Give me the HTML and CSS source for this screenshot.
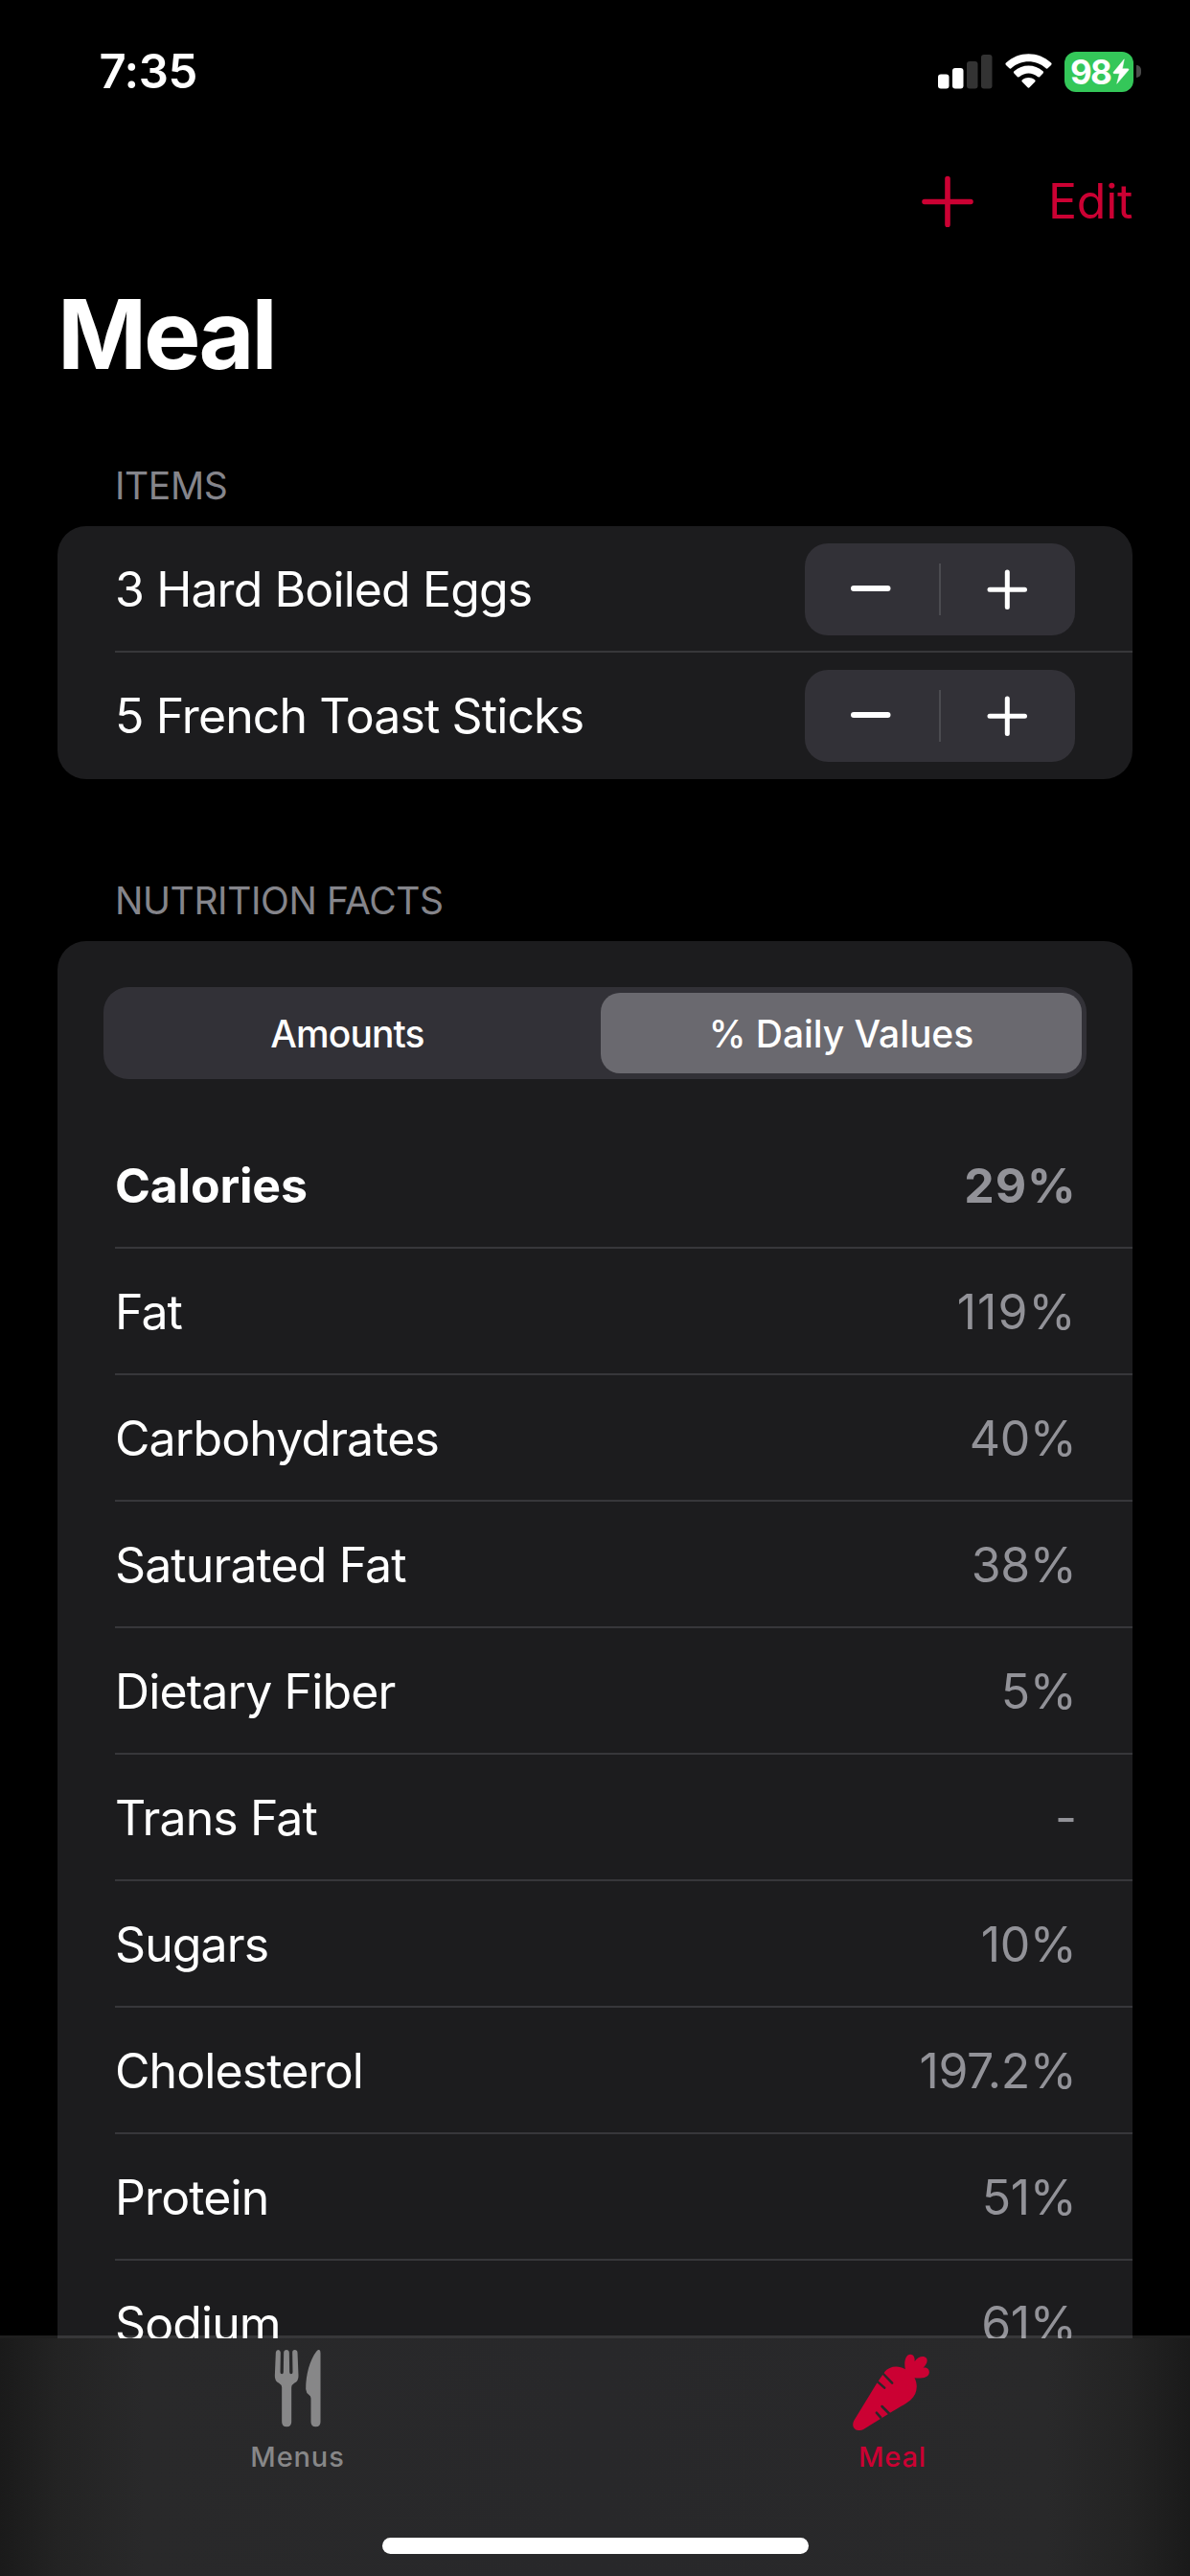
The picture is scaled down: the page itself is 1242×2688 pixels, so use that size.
FILE: index.html
```html
<!DOCTYPE html>
<html lang="en">
<head>
<meta charset="utf-8">
<title>Meal</title>
<link rel="stylesheet" href="styles.css">
</head>
<body>
<div class="screen">
  <header class="status">
    <span class="clock">7:35</span>
    <div class="indicators">
      <svg class="signal" viewBox="0 0 57 36" width="57" height="36">
        <g fill="#fff"><rect x="0" y="20.500" width="11.500" height="15" rx="3"/><rect x="15" y="14" width="11.500" height="21.500" rx="3"/></g>
        <g fill="#333"><rect x="30" y="7" width="11.500" height="28.500" rx="3"/><rect x="45" y="0" width="11.500" height="35.500" rx="3"/></g>
      </svg>
      <svg class="wifi" viewBox="0 0 49 37" width="49" height="37" fill="#fff">
        <path d="M1 9.500C14-3 35-3 48 9.500c.8.800.8 1.700 0 2.400l-3.200 3.200c-.8.800-1.700.8-2.500 0C32.500 6 16.500 6 6.700 15.100c-.8.800-1.700.8-2.500 0L1 11.900c-.8-.7-.8-1.600 0-2.400z"/>
        <path d="M9.500 18.200c8.500-7.600 21.500-7.600 30 0 .8.700.8 1.700.1 2.400l-3.300 3.300c-.7.700-1.600.7-2.400.1-5.400-4.700-13.400-4.700-18.800 0-.8.600-1.700.6-2.400-.1l-3.300-3.300c-.7-.7-.7-1.700.1-2.400z"/>
        <path d="M18 27.200c3.800-3 9.200-3 13 0 .8.700.8 1.600.1 2.300l-5.400 5.600c-.7.700-1.700.7-2.400 0l-5.400-5.600c-.7-.7-.7-1.600.1-2.300z"/>
      </svg>
      <div class="battery">
        <div class="battery-body">
          <span>98</span>
          <svg viewBox="0 0 18 27" width="18" height="27"><path d="M12.300.8 1.200 14.200c-.6.800-.2 1.500.6 1.500h5.600L4.700 26.300l12-14c.6-.8.200-1.500-.6-1.500h-5.700z" fill="#fff" stroke="#fff" stroke-width=".5" stroke-linejoin="round"/></svg>
        </div>
        <i class="battery-cap"></i>
      </div>
    </div>
  </header>

  <nav class="nav">
    <svg viewBox="0 0 54 54" width="54" height="54" stroke="#cb0133" stroke-width="5.600" stroke-linecap="round"><path d="M3 27.500h48M27 3.500v48"/></svg>
    <a class="edit">Edit</a>
  </nav>

  <h1 class="title">Meal</h1>

  <section class="section items">
    <h2 class="section-head">ITEMS</h2>
    <div class="card">
      <div class="row">
        <span class="label">3 Hard Boiled Eggs</span>
        <div class="stepper">
          <svg viewBox="0 0 140 96" width="140" height="96"><path d="M51 47h35.500" stroke="#fff" stroke-width="6" stroke-linecap="round"/></svg>
          <i></i>
          <svg viewBox="0 0 140 96" width="140" height="96"><path d="M51 48.300h36.500M69.300 30v36.500" stroke="#fff" stroke-width="5" stroke-linecap="round"/></svg>
        </div>
      </div>
      <div class="row">
        <span class="label">5 French Toast Sticks</span>
        <div class="stepper">
          <svg viewBox="0 0 140 96" width="140" height="96"><path d="M51 47h35.500" stroke="#fff" stroke-width="6" stroke-linecap="round"/></svg>
          <i></i>
          <svg viewBox="0 0 140 96" width="140" height="96"><path d="M51 48.300h36.500M69.300 30v36.500" stroke="#fff" stroke-width="5" stroke-linecap="round"/></svg>
        </div>
      </div>
    </div>
  </section>

  <section class="section facts">
    <h2 class="section-head">NUTRITION FACTS</h2>
    <div class="card">
      <div class="segmented">
        <span class="segment amounts">Amounts</span>
        <span class="segment selected">% Daily Values</span>
      </div>
      <div class="row strong"><span class="label">Calories</span><span class="value">29%</span></div>
      <div class="row"><span class="label">Fat</span><span class="value ones">119%</span></div>
      <div class="row"><span class="label">Carbohydrates</span><span class="value">40%</span></div>
      <div class="row"><span class="label">Saturated Fat</span><span class="value">38%</span></div>
      <div class="row"><span class="label">Dietary Fiber</span><span class="value">5%</span></div>
      <div class="row"><span class="label">Trans Fat</span><span class="value">-</span></div>
      <div class="row"><span class="label">Sugars</span><span class="value">10%</span></div>
      <div class="row"><span class="label">Cholesterol</span><span class="value">197.2%</span></div>
      <div class="row"><span class="label">Protein</span><span class="value">51%</span></div>
      <div class="row"><span class="label">Sodium</span><span class="value">61%</span></div>
    </div>
  </section>

  <footer class="tabbar">
    <div class="tabs">
      <div class="tab">
        <svg viewBox="25.500 66 252 252" width="84" height="84" fill="#878788">
          <path d="M82 74q1-8 7.500-8t7.500 8l-1 62q0 6 5 6t5-6l1-62q1-8 8.500-8t8.500 8l1 62q0 6 5 6t5-6l-1-62q0-8 7.500-8t8.500 8l3 72q1 17-13 24-9 5-9 14V292q0 15-15 15t-15-15V184q0-9-9-14-14-7-13-24z"/>
          <path d="M222 76V292q0 15-15 15t-15-15V218q0-7-6-11-9-6-10-18c0-48 13-91 33-118q5-6 9-5 4 1 4 10z"/>
        </svg>
        <span>Menus</span>
      </div>
      <div class="tab active">
        <svg viewBox="58.500 66 252 252" width="84" height="84">
          <path fill="#cb0133" d="M62 288 134 170 159 134C172 118 200 112 223 127 218 104 224 80 239 80 250 80 254 92 252 103 262 88 279 83 288 91 296 99 289 113 279 122 291 120 299 128 298 137 297 152 275 157 252 154 264 178 260 205 240 223 226 235 196 251 178 262L92 315C70 325 52 310 62 288z"/>
          <path d="M134 164 158 185M154 141 182 170M133 263 146 278M150 243 174 267" fill="none" stroke="#29292a" stroke-width="7.500" stroke-linecap="round"/>
        </svg>
        <span>Meal</span>
      </div>
    </div>
    <div class="home"></div>
  </footer>
</div>
</body>
</html>
```

FILE: styles.css
```css
* { box-sizing: border-box; }

body {
  margin: 0;
  background: #000;
  color: #fff;
  font-family: Inter, "Liberation Sans", sans-serif;
}

.screen {
  position: relative;
  width: 1242px;
  height: 2688px;
  overflow: hidden;
  background: #000;
}

svg { display: block; flex: none; }

.status {
  display: flex;
  justify-content: space-between;
  align-items: center;
  height: 149px;
  padding: 0 51px 0 103.500px;
}

.clock {
  font-size: 49px;
  font-weight: 600;
  letter-spacing: -.5px;
}

.indicators {
  display: flex;
  align-items: center;
  gap: 13px;
}

.battery { display: flex; align-items: center; gap: 3px; }

.battery-body {
  display: flex;
  align-items: center;
  width: 72px;
  height: 42px;
  padding-left: 6px;
  border-radius: 12px;
  background: #34c759;
}

.battery-body span {
  font-size: 35px;
  font-weight: 700;
  letter-spacing: -1.8px;
}

.battery-body svg { margin-left: 2px; }

.battery-cap {
  width: 5px;
  height: 13px;
  border-radius: 0 6px 6px 0;
  background: #4a4a4a;
}

.nav {
  display: flex;
  justify-content: flex-end;
  align-items: center;
  gap: 78px;
  height: 122px;
  padding-right: 60px;
}

.edit {
  color: #cb0133;
  font-size: 50px;
  letter-spacing: -.3px;
}

.title {
  margin: 0;
  height: 155px;
  padding-left: 60px;
  font-size: 100px;
  font-weight: 700;
  line-height: 155px;
  letter-spacing: -3.1px;
}

.section { padding: 0 60px; }
.items { margin-top: 39px; }
.facts { margin-top: 85px; }

.section-head {
  margin: 0;
  padding-left: 60px;
  height: 84px;
  color: #85858b;
  font-size: 39px;
  font-weight: 400;
  line-height: 84px;
  letter-spacing: -.4px;
}

.card {
  border-radius: 30px;
  background: #1c1c1e;
}

.row {
  display: flex;
  justify-content: space-between;
  align-items: center;
  height: 132px;
  margin-left: 60px;
  padding-right: 60px;
  font-size: 50px;
}

.row:not(:last-child) { box-shadow: inset 0 -2px #37373a; }

.label { letter-spacing: -.9px; }

.value {
  margin-right: -1.5px;
  color: #929298;
  letter-spacing: -.4px;
}

.ones { letter-spacing: 1px; }
.strong { font-weight: 700; }
.strong .label { letter-spacing: -.2px; }
.strong .value { letter-spacing: .8px; }

.stepper {
  display: flex;
  align-items: center;
  width: 282px;
  height: 96px;
  border-radius: 24px;
  background: #323137;
}

.stepper i {
  width: 2px;
  height: 54px;
  background: #4b4b50;
}

.facts .card { padding-top: 48px; }

.segmented {
  display: flex;
  height: 96px;
  margin: 0 48px 45px;
  padding: 6px 5px 6px 0;
  border-radius: 26px;
  background: #323137;
}

.segment {
  flex: 1 1 0;
  display: flex;
  align-items: center;
  justify-content: center;
  font-size: 39px;
  font-weight: 500;
}

.amounts {
  flex: 0 0 519px;
  padding-right: 10px;
  letter-spacing: -.9px;
}

.selected {
  border-radius: 20px;
  background: #6a696f;
  letter-spacing: -.05px;
}

.tabbar {
  position: absolute;
  left: 0;
  right: 0;
  bottom: 0;
  display: flex;
  flex-direction: column;
  height: 251px;
  border-top: 3px solid rgba(255, 255, 255, .12);
  background: linear-gradient(90deg, #1a1a1a, #232323 60px, #29292a 150px, #28282a 621px, #29292a 1092px, #232323 1182px, #1a1a1a) padding-box;
}

.tabs { display: flex; padding-top: 12px; }

.tab {
  flex: 1;
  display: flex;
  flex-direction: column;
  align-items: center;
  gap: 11px;
  color: #878788;
  font-size: 29px;
  font-weight: 500;
  line-height: 34px;
  letter-spacing: .85px;
}

.active { color: #cb0133; }

.home {
  width: 445px;
  height: 17px;
  margin: auto auto 23px;
  border-radius: 9px;
  background: #fff;
}
```
